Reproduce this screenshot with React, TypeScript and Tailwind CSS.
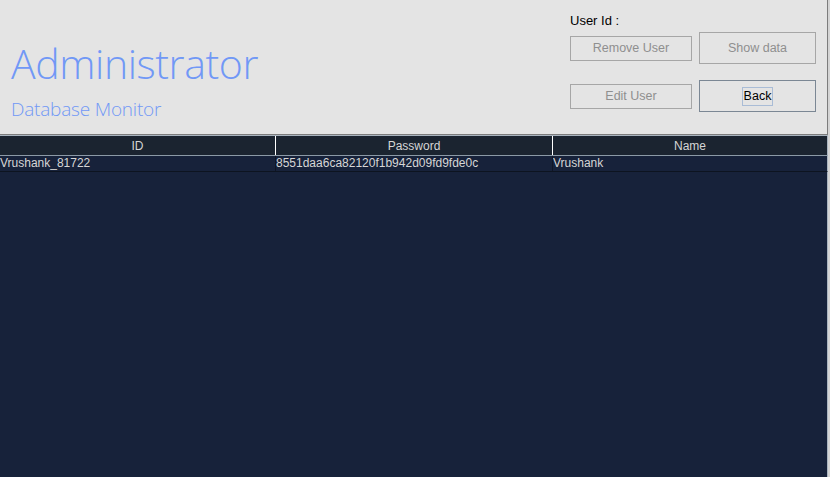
const rows = [
  { id: "Vrushank_81722", password: "8551daa6ca82120f1b942d09fd9fde0c", name: "Vrushank" },
];

function FlatButton({ label, disabled = false, className = "" }: { label: string; disabled?: boolean; className?: string }) {
  return (
    <button
      type="button"
      className={`flex items-center justify-center bg-[#e4e4e4] text-[12.5px] ${
        disabled ? "border border-[#a6a6a6] text-[#8f8f8f]" : "border border-[#7b8794] text-black"
      } ${className}`}
    >
      {disabled ? label : <span className="border border-[#a9bcd6] px-px leading-[17px]">{label}</span>}
    </button>
  );
}

export default function App() {
  return (
    <div className="flex h-[477px] w-[830px] overflow-hidden bg-[#d4d4d4] font-['Liberation_Sans',Arial,sans-serif]">
      <div className="flex w-[828px] flex-col bg-[#17223a]">
        <header className="flex h-[135px] border-b border-r border-[#7c7c7c] bg-[#e4e4e4]">
          <div className="flex flex-col pl-[11px] pt-[43px] font-['Open_Sans',sans-serif] font-light text-[#7198f6]">
            <h1 className="text-[41px] leading-[41px] tracking-[-0.4px]">Administrator</h1>
            <p className="mt-[16px] text-[19px] leading-[19px] tracking-[-0.2px]">Database Monitor</p>
          </div>
          <div className="ml-auto flex flex-col pr-[11px] pt-[13px]">
            <span className="h-[16px] text-[13px] leading-[16px] text-black">User Id :</span>
            <div className="mt-[3px] grid grid-cols-[122px_117px] items-center gap-x-[7px] gap-y-[16px]">
              <FlatButton label="Remove User" disabled className="h-[25px]" />
              <FlatButton label="Show data" disabled className="h-[32px]" />
              <FlatButton label="Edit User" disabled className="h-[25px]" />
              <FlatButton label="Back" className="h-[32px]" />
            </div>
          </div>
        </header>

        <div className="grid h-[21px] grid-cols-[275px_277px_1fr] border-y border-b-[#8c9aa6] border-t-[#a9b4bf] border-r border-r-[#a9b4bf] bg-[#1b2430] text-[12px] text-[#d6d6d6]">
          <div className="flex items-center justify-center">ID</div>
          <div className="flex items-center justify-center border-l border-white">Password</div>
          <div className="flex items-center justify-center border-l border-white">Name</div>
        </div>

        {rows.map((row) => (
          <div
            key={row.id}
            className="grid h-[16px] grid-cols-[275px_277px_1fr] border-b border-r border-b-[#0d1420] border-r-[#a9b4bf] text-[12px] leading-[15px] text-[#d6d6d6]"
          >
            <div className="overflow-hidden whitespace-nowrap">{row.id}</div>
            <div className="overflow-hidden whitespace-nowrap border-l border-[#0f1626]">{row.password}</div>
            <div className="overflow-hidden whitespace-nowrap border-l border-[#0f1626]">{row.name}</div>
          </div>
        ))}

        <div className="flex-1 border-r border-[#a9b4bf]" />
      </div>
    </div>
  );
}
